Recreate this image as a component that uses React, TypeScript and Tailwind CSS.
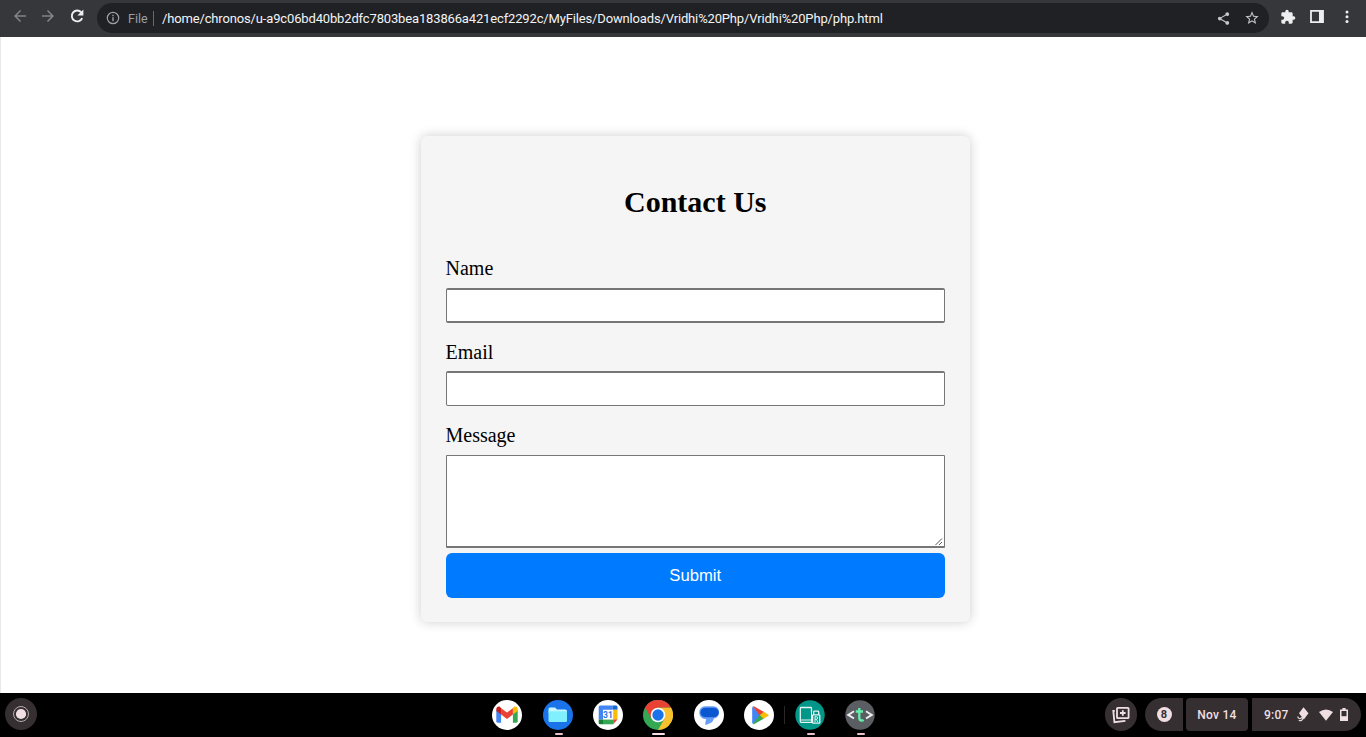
import React from "react";

const url =
  "/home/chronos/u-a9c06bd40bb2dfc7803bea183866a421ecf2292c/MyFiles/Downloads/Vridhi%20Php/Vridhi%20Php/php.html";

function Svg({ d, className, box = "0 0 24 24" }: { d: string; className: string; box?: string }) {
  return (
    <svg viewBox={box} className={`shrink-0 ${className}`} fill="currentColor">
      <path d={d} />
    </svg>
  );
}

function Toolbar() {
  return (
    <header className="flex h-[37px] w-full shrink-0 bg-[#36373b] pl-[11px] text-[#eceef0]">
      <div className="flex pt-[7px]">
        <Svg className="h-[18px] w-[18px] text-[#828488]" d="M20 11H7.83l5.59-5.59L12 4l-8 8 8 8 1.41-1.41L7.83 13H20v-2z" />
        <Svg className="ml-[10px] h-[18px] w-[18px] text-[#828488]" d="M12 4l-1.41 1.41L16.17 11H4v2h12.17l-5.58 5.59L12 20l8-8z" />
        <svg viewBox="0 0 18 18" className="ml-[11px] h-[18px] w-[18px]" fill="none">
          <path d="M14.2 11.1A5.4 5.4 0 1 1 13.3 5.4" stroke="currentColor" strokeWidth="1.9" />
          <path d="M15.4 2.6v6H9.4z" fill="currentColor" />
        </svg>
      </div>
      <div className="ml-[11px] mt-[3px] flex h-[30px] w-[1172px] items-center rounded-full bg-[#202124] pl-[9px]">
        <svg viewBox="0 0 14 14" className="h-[14px] w-[14px] text-[#9aa0a6]" fill="none">
          <circle cx="7" cy="7" r="5.7" stroke="currentColor" strokeWidth="1.2" />
          <path d="M7 6.2v4M7 3.8v1.4" stroke="currentColor" strokeWidth="1.4" />
        </svg>
        <span className="ml-[8px] w-[25px] pt-[2px] font-[Roboto,sans-serif] text-[12.5px] leading-[16px] text-[#9aa0a6]">File</span>
        <span className="h-[15px] w-px bg-[#66696d]" />
        <span className="ml-[8px] w-[1054px] whitespace-nowrap pt-[2px] font-[Roboto,sans-serif] text-[13px] leading-[16px] tracking-[-0.150px] text-[#f3f4f6]">{url}</span>
        <Svg className="h-[15px] w-[15px] text-[#c5c7ca]" d="M18 16.1c-.8 0-1.4.3-2 .8l-7.100-4.200c.1-.2.1-.5.1-.7s0-.5-.1-.7L16 7.200c.5.5 1.200.8 2 .8 1.700 0 3-1.300 3-3s-1.300-3-3-3-3 1.300-3 3c0 .2 0 .5.1.7L8 9.800C7.500 9.300 6.800 9 6 9c-1.700 0-3 1.300-3 3s1.300 3 3 3c.8 0 1.500-.3 2-.8l7.100 4.200c-.1.2-.1.400-.1.600 0 1.600 1.300 3 3 3s3-1.400 3-3-1.300-2.900-3-2.900z" />
        <Svg
          className="ml-[13px] h-[16px] w-[16px] text-[#c5c7ca]"
          d="M22 9.240l-7.190-.62L12 2 9.190 8.630 2 9.240l5.460 4.730L5.820 21 12 17.270 18.180 21l-1.630-7.030L22 9.240zM12 15.400l-3.760 2.270 1-4.280-3.320-2.880 4.380-.38L12 6.100l1.710 4.040 4.380.38-3.320 2.880 1 4.280L12 15.400z"
        />
      </div>
      <div className="flex pt-[9px]">
        <Svg
          className="ml-[11px] h-[16px] w-[16px]"
          d="M20.500 11H19V7c0-1.100-.9-2-2-2h-4V3.500a2.500 2.500 0 0 0-5 0V5H4c-1.100 0-2 .9-2 2v3.800h1.500c1.500 0 2.700 1.200 2.700 2.700s-1.200 2.700-2.700 2.700H2V20c0 1.100.9 2 2 2h3.800v-1.500c0-1.500 1.200-2.700 2.700-2.700s2.700 1.200 2.700 2.700V22H17c1.100 0 2-.9 2-2v-4h1.500a2.500 2.500 0 0 0 0-5z"
        />
        <svg viewBox="0 0 14 14" className="ml-[14px] mt-px h-[13px] w-[14px]" preserveAspectRatio="none">
          <path d="M1 1h12v12H1z" fill="none" stroke="currentColor" strokeWidth="1.800" />
          <path d="M9 1h4v12H9z" fill="currentColor" />
        </svg>
        <svg viewBox="0 0 4 14" className="ml-[21px] mt-px h-[14px] w-[4px]" fill="currentColor">
          <circle cx="2" cy="2" r="1.500" />
          <circle cx="2" cy="6.700" r="1.500" />
          <circle cx="2" cy="11.400" r="1.500" />
        </svg>
      </div>
    </header>
  );
}

function ContactForm() {
  return (
    <form
      className="mt-[98.500px] h-[486.500px] w-[549.500px] rounded-[6px] bg-[#f5f5f5] px-[25px] font-['Liberation_Serif',serif] text-black shadow-[0_0_12px_rgba(0,0,0,0.2)]"
      onSubmit={(e) => e.preventDefault()}
    >
      <h2 className="pt-[48px] text-center text-[30px] font-bold leading-[35px]">Contact Us</h2>
      <label htmlFor="name" className="mt-[38px] block text-[20px] leading-[23px]">Name</label>
      <input id="name" className="mt-[8px] block h-[35px] w-full rounded-[2px] border border-y-2 border-[#767676] bg-white px-2 outline-none" />
      <label htmlFor="email" className="mt-[18px] block text-[20px] leading-[23px]">Email</label>
      <input id="email" className="mt-[7px] block h-[35px] w-full rounded-[2px] border border-t-2 border-[#767676] bg-white px-2 outline-none" />
      <label htmlFor="message" className="mt-[18px] block text-[20px] leading-[23px]">Message</label>
      <div className="mt-[8px] flex h-[93px] items-end rounded-[1px] border border-b-2 border-[#767676] bg-white">
        <textarea id="message" className="h-full w-full resize-none bg-transparent px-2 outline-none" />
        <svg viewBox="0 0 8 8" className="mr-[1px] h-[8px] w-[8px] shrink-0" fill="none" stroke="#555" strokeWidth="1">
          <path d="M.5 7L7 .5M4 7l3-3" />
        </svg>
      </div>
      <button className="mt-[5px] block h-[45px] w-full rounded-[6px] bg-[#007bff] pt-[2px] font-['Liberation_Sans',sans-serif] text-[16.670px] leading-[20px] text-white">
        Submit
      </button>
    </form>
  );
}

function AppIcon({ children, mark = "" }: { children: React.ReactNode; mark?: string }) {
  return (
    <div className="flex w-[50.430px] flex-col items-center pt-[7px]">
      <svg viewBox="0 0 30 30" className="h-[30px] w-[30px] shrink-0">{children}</svg>
      <span className={`mt-[3px] h-[2px] rounded-[1px] ${mark}`} />
    </div>
  );
}

const smallMark = "ml-[2px] w-[8px] bg-[#e8c1cc]";

function Shelf() {
  return (
    <footer className="flex h-[44px] w-full shrink-0 bg-black text-[#efdfe3]">
      <div className="w-[482px] pl-[5px] pt-[5px]">
        <svg viewBox="0 0 32 32" className="h-[32px] w-[32px]">
          <circle cx="16" cy="16" r="16" fill="#352f31" />
          <circle cx="16" cy="16" r="7.500" fill="none" stroke="#b5abad" strokeWidth="1" />
          <circle cx="16" cy="16" r="5.100" fill="#f1dfe3" />
        </svg>
      </div>
      <nav className="flex">
        <AppIcon>
          <circle cx="15" cy="15" r="15" fill="#fff" />
          <path d="M4.300 10v11.300q0 1.400 1.400 1.400h3.400V12z" fill="#4285f4" />
          <path d="M20.900 12v10.700h3.400q1.400 0 1.400-1.400V10z" fill="#34a853" />
          <path d="M20.900 8.200v6.400l4.800-3.600V9c0-2-2.100-3.200-3.800-2z" fill="#fbbc04" />
          <path d="M9.100 14.600V8.200l5.900 4.400 5.900-4.400v6.400L15 19z" fill="#ea4335" />
          <path d="M4.300 9v2l4.800 3.600V8.200L8.100 7C6.400 5.800 4.300 7 4.300 9z" fill="#c5221f" />
        </AppIcon>
        <AppIcon mark={smallMark}>
          <circle cx="15" cy="15" r="15" fill="#1a73e8" />
          <path d="M5.500 9q0-1.500 1.500-1.500h5l2 2h8.500q1.500 0 1.500 1.500v2H5.500z" fill="#c5f7ff" />
          <path d="M5.500 11.200h18.500v9.300q0 1.500-1.500 1.500H7q-1.500 0-1.500-1.500z" fill="#80f0ff" />
        </AppIcon>
        <AppIcon>
          <circle cx="15" cy="15" r="15" fill="#fff" />
          <path d="M7 5.500h12.500v4.300H10v9.800H5.700V7q0-1.500 1.300-1.500z" fill="#4285f4" />
          <path d="M19.500 5.500H23q1.500 0 1.500 1.500v2.800h-5z" fill="#1967d2" />
          <path d="M20.200 9.800h4.300v9.800h-4.300z" fill="#fbbc04" />
          <path d="M10 19.600h10.200v4.700H10z" fill="#34a853" />
          <path d="M5.700 19.600H10v4.700H7q-1.300 0-1.300-1.300z" fill="#188038" />
          <path d="M20.200 19.600h4.300l-4.300 4.700z" fill="#ea4335" />
          <text x="15" y="17.900" textAnchor="middle" fontFamily="Roboto, sans-serif" fontSize="8.500" fontWeight="700" fill="#2878e8">31</text>
        </AppIcon>
        <AppIcon mark="ml-px w-[13px] bg-[#f5dfe5]">
          <circle cx="15" cy="15" r="15" fill="#34a853" />
          <path d="M15 7.500h13A15 15 0 0 1 15 30l6.500-11.200z" fill="#fbc02d" />
          <path d="M2 7.500A15 15 0 0 1 28 7.500H15L8.500 18.750z" fill="#e94235" />
          <circle cx="15" cy="15" r="7.300" fill="#fff" />
          <circle cx="15" cy="15" r="5.700" fill="#1a73e8" />
        </AppIcon>
        <AppIcon>
          <circle cx="15" cy="15" r="15" fill="#fff" />
          <path d="M11 6.300h8c8 0 8 11.500 1 12.200l-1.500 3q-.5.900-1.500 1.200l-4 1.800c-1.400.8-2 .1-1.700-1l.7-4.500H11C3.500 18.500 3.500 6.300 11 6.300z" fill="#669df6" />
          <path d="M11.500 7.800h8c7 0 7 9.500 0 9.500h-8c-6.700 0-6.700-9.500 0-9.500z" fill="#0b57d0" />
        </AppIcon>
        <AppIcon>
          <circle cx="15" cy="15" r="15" fill="#fff" />
          <path d="M9 6.600q-.8.400-.8 1.600v14q0 1.200.8 1.700l7.800-8.700z" fill="#4285f4" />
          <path d="M9 6.600q.8-.5 1.800.1l9.800 5.600-4.500 4z" fill="#ea4335" />
          <path d="M9 23.900q.8.500 1.800-.1l9.800-5.700-4.500-4z" fill="#34a853" />
          <path d="M19.600 11.800l4.500 2.600q1.200.8 0 1.600l-4.500 2.700-3.800-3.400z" fill="#fbbc04" />
        </AppIcon>
        <AppIcon mark={smallMark}>
          <circle cx="15" cy="15" r="14.700" fill="#009688" />
          <g fill="none" stroke="#e4f4f2" strokeWidth="1.300">
            <path d="M17 22.300H6q-.7 0-.7-.7V8.200q0-.7.7-.7h9.800q.7 0 .7.700v4" />
            <path d="M16.500 12v10.300M5.300 20h11" strokeWidth="1" />
            <path d="M18.300 14.800h5.800q.7 0 .7.700v7q0 .7-.7.700h-5.800q-.7 0-.7-.7v-7q0-.7.700-.7zM18.700 14.500v-2.600q0-.7.7-.7h3.600q.7 0 .7.700v2.600" />
            <path d="M20 22v-5.300h1.400q1.300 0 1.300 1.300 0 1.200-1.300 1.200H20m1.300 0L22.900 22" strokeWidth="1" />
          </g>
        </AppIcon>
        <AppIcon mark={smallMark}>
          <circle cx="15" cy="15" r="14.700" fill="#5a5e63" />
          <path d="M9 11.300l-5.800 3.600L9 18.500M21 11.300l5.800 3.600-5.800 3.600" fill="none" stroke="#eee" strokeWidth="1.900" />
          <path d="M14.300 8v10q0 2.500 2.300 2.500 1.200 0 2-.5M10.800 11.500h7.200" fill="none" stroke="#64edac" strokeWidth="2.300" />
        </AppIcon>
      </nav>
      <span className="-ml-[101px] mt-[13px] h-[18px] w-px bg-[#2b2829]" />
      <div className="ml-auto flex gap-[3px] pr-[5px] pt-[5px] font-[Roboto,sans-serif] text-[12px] font-medium">
        <div className="mr-[5px] flex h-[33px] w-[32px] items-center justify-center rounded-full bg-[#352f31]">
          <svg viewBox="0 0 18 18" className="h-[18px] w-[18px]" fill="none" stroke="currentColor" strokeWidth="1.800">
            <path d="M5.800 1.800h10q.8 0 .8.800v8.800q0 .8-.8.800h-10q-.8 0-.8-.8V2.600q0-.8.800-.8zM10.800 4.200v5.600M8 7h5.600M2.800 4.800H1.300l1.100 11.400 11-1.400" />
          </svg>
        </div>
        <div className="flex h-[33px] w-[38px] items-center justify-center rounded-l-full rounded-r-[4px] bg-[#352f31]">
          <span className="flex h-[15px] w-[15px] items-center justify-center rounded-full bg-[#efdfe3] text-[11px] font-bold leading-[15px] text-[#352f31]">8</span>
        </div>
        <div className="mr-px flex h-[33px] w-[62px] items-center justify-center rounded-[4px] bg-[#352f31] tracking-[0.250px]">Nov 14</div>
        <div className="flex h-[33px] w-[109px] items-center rounded-l-[4px] rounded-r-full bg-[#352f31] pl-[12px]">
          <span className="w-[33px] tracking-[0.250px]">9:07</span>
          <svg viewBox="0 0 12 15" className="h-[15px] w-[12px]" fill="currentColor">
            <path d="M6.500.2L11.500 6.200 6.800 12.500 2 6.200z" />
            <path d="M.8 9.500c0 2.300 3 2.800 4 .8M5.800 10c.5 3-2 4.500-4 3.300" fill="none" stroke="currentColor" strokeWidth="1.200" />
          </svg>
          <svg viewBox="0 0 14 12" className="ml-[10px] h-[12px] w-[14px]" fill="currentColor">
            <path d="M0 3Q7-2.200 14 3L7 11.800z" />
          </svg>
          <svg viewBox="0 0 8 13" className="ml-[7px] h-[13px] w-[8px]">
            <path d="M2.400 0h3.200v1.500H8V13H0V1.500h2.400z" fill="currentColor" />
            <path d="M1.500 3h5v5.200h-5z" fill="#352f31" />
          </svg>
        </div>
      </div>
    </footer>
  );
}

export default function App() {
  return (
    <div className="flex h-[737px] w-[1366px] flex-col overflow-hidden bg-white">
      <Toolbar />
      <main className="flex min-h-0 flex-1 items-start border-l border-[#e8e8e8] pl-[419.500px]">
        <ContactForm />
      </main>
      <Shelf />
    </div>
  );
}
